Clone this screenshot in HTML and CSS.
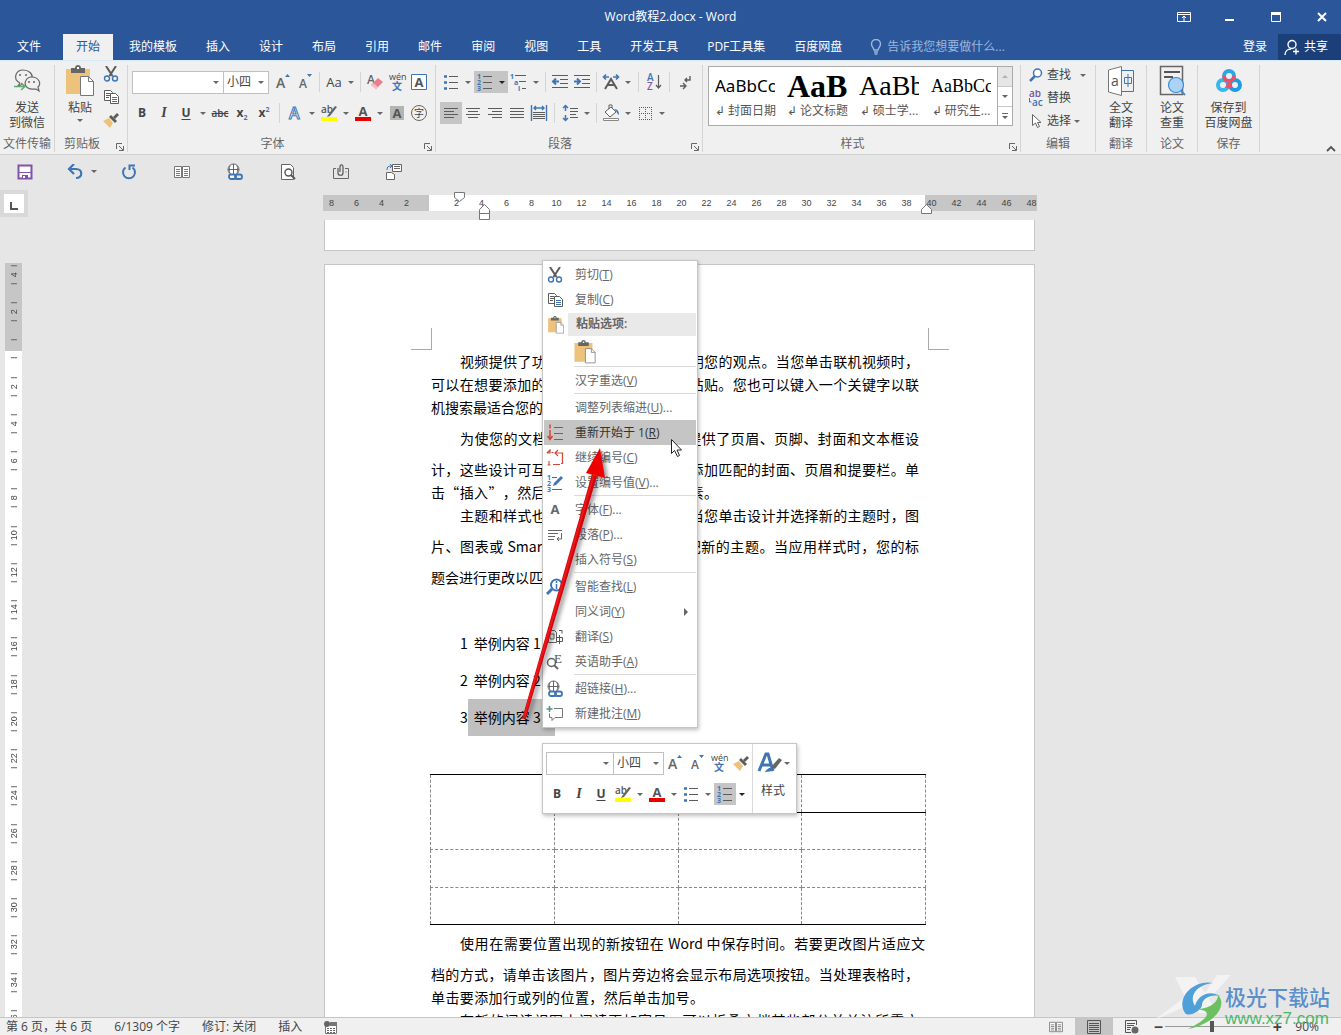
FILE: index.html
```html
<!DOCTYPE html>
<html lang="zh-CN">
<head>
<meta charset="utf-8">
<meta name="viewport" content="width=device-width, initial-scale=1">
<title>Word教程2.docx - Word</title>
<link rel="stylesheet" href="styles.css">
</head>
<body>
<svg class="defs" aria-hidden="true">
  <symbol id="scissors" viewBox="0 0 16 16"><path d="M3 0l6.500 10M13 0L6.500 10" fill="none" stroke="#5c5c5c" stroke-width="2"/><circle cx="4" cy="12.500" r="2.500" fill="none" stroke="#3f74b5" stroke-width="1.400"/><circle cx="12" cy="12.500" r="2.500" fill="none" stroke="#3f74b5" stroke-width="1.400"/></symbol>
  <symbol id="copy" viewBox="0 0 16 16"><path d="M1.500 1.500h6l2 2v8h-8zM3 4.500h4M3 6.500h4M3 8.500h3" fill="#fff" stroke="#5c5c5c"/><path d="M7.500 4.500h5l3 3v7h-8z" fill="#fff" stroke="#5c5c5c"/><path d="M9 8.500h5M9 10.500h5M9 12.500h5" stroke="#3f74b5"/></symbol>
  <symbol id="clip" viewBox="0 0 28 32"><path d="M0 4h24v25H0z" fill="#edc37c"/><path d="M5 3h4c0-4 6-4 6 0h4v5H5z" fill="#666"/><path d="M11 2h2v2h-2z" fill="#fff"/><path d="M14.500 11.500h8l5 5v14h-13z" fill="#fff" stroke="#777"/><path d="M22.500 11.500v5h5" fill="none" stroke="#777"/></symbol>
  <symbol id="brush" viewBox="0 0 16 16"><path d="M0 9l6-3 4 5-3 5z" fill="#edc37c"/><path d="M6 5l2-2 6 6-2 2z" fill="#5c5c5c"/><path d="M10 5l4-4 2 2-4 4z" fill="#5c5c5c"/></symbol>
  <symbol id="grow" viewBox="0 0 20 20"><text x="3" y="16" class="t14">A</text><path d="M12 5l2.500-3L17 5z" fill="#3f74b5"/></symbol>
  <symbol id="shrink" viewBox="0 0 20 20"><text x="4" y="16" class="t12">A</text><path d="M12 2l2.500 3L17 2z" fill="#3f74b5"/></symbol>
  <symbol id="eraser" viewBox="0 0 20 20"><text x="2" y="12" class="t12">A</text><path d="M6 13l7-7 5 4-7 7z" fill="#ec7f8f"/><path d="M6 13l2-2 5 4-2 2z" fill="#f6bcc5"/></symbol>
  <symbol id="wen" viewBox="0 0 20 20"><text x="2" y="8" class="t9">wén</text><text x="5" y="18" class="cj">文</text></symbol>
  <symbol id="boxa" viewBox="0 0 20 20"><path d="M2.500 2.500h15v15h-15z" fill="#fff" stroke="#3f74b5"/><text x="5.500" y="15" class="t14b">A</text></symbol>
  <symbol id="outa" viewBox="0 0 20 20"><text x="4" y="16" class="outl">A</text></symbol>
  <symbol id="hl" viewBox="0 0 20 20"><text x="2" y="10" class="t10b">ab</text><path d="M9 12l7-9 2 1-7 9-3 1z" fill="#666"/><path d="M2 14h16v4H2z" fill="#ff0"/></symbol>
  <symbol id="reda" viewBox="0 0 20 20"><text x="5.500" y="13" class="t14b">A</text><path d="M2 14h16v4H2z" fill="#e80000"/></symbol>
  <symbol id="shadea" viewBox="0 0 20 20"><path d="M3 3h14v14H3z" fill="#b4b4b4"/><text x="5.500" y="15" class="t14b">A</text></symbol>
  <symbol id="circ" viewBox="0 0 20 20"><circle cx="10" cy="10" r="7.500" fill="none" stroke="#666"/><text x="5" y="14" class="cjg">字</text></symbol>
  <symbol id="bul" viewBox="0 0 20 20"><path d="M3 4.500h3M3 10.500h3M3 16.500h3" stroke="#3f74b5" stroke-width="2.500"/><path d="M8 4.500h9M8 10.500h9M8 16.500h9" stroke="#5c5c5c"/></symbol>
  <symbol id="num" viewBox="0 0 20 20"><text x="2" y="7" class="n">1</text><text x="2" y="13" class="n">2</text><text x="2" y="19" class="n">3</text><path d="M8 4.500h9M8 10.500h9M8 16.500h9" stroke="#5c5c5c"/></symbol>
  <symbol id="multi" viewBox="0 0 20 20"><text x="1" y="7" class="n">1</text><text x="5" y="13" class="n">a</text><text x="9" y="19" class="n">i</text><path d="M6 3.500h11M10 9.500h7M13 16.500h4" stroke="#5c5c5c"/></symbol>
  <symbol id="outd" viewBox="0 0 20 20"><path d="M2 3.500h16M10 7.500h8M10 11.500h8M2 15.500h16" stroke="#5c5c5c"/><path d="M9 9.500H3M6 6.500l-3 3 3 3" fill="none" stroke="#3f74b5" stroke-width="2"/></symbol>
  <symbol id="ind" viewBox="0 0 20 20"><path d="M2 3.500h16M10 7.500h8M10 11.500h8M2 15.500h16" stroke="#5c5c5c"/><path d="M2 9.500h6M5 6.500l3 3-3 3" fill="none" stroke="#3f74b5" stroke-width="2"/></symbol>
  <symbol id="scale" viewBox="0 0 20 20"><path d="M8 5H3M12 5h5M5 2.500L2.500 5 5 7.500M15 2.500L17.500 5 15 7.500" fill="none" stroke="#3f74b5" stroke-width="1.600"/><path d="M4 17l6-10 6 10M7 13h6" fill="none" stroke="#5c5c5c" stroke-width="2"/></symbol>
  <symbol id="az" viewBox="0 0 20 20"><text x="3" y="9" class="n10">A</text><text x="3" y="18" class="np">Z</text><path d="M14.500 3v13M12 13l2.500 3 2.500-3" fill="none" stroke="#5c5c5c" stroke-width="1.200"/></symbol>
  <symbol id="marks" viewBox="0 0 20 20"><path d="M15 4v4h-5M12 6l-2 2 2 2M5 14h5M8 11l3 3-3 3" fill="none" stroke="#5c5c5c" stroke-width="1.400"/></symbol>
  <symbol id="al" viewBox="0 0 20 20"><path d="M3 5.500h14M3 8.500h10M3 11.500h14M3 14.500h10" stroke="#5c5c5c"/></symbol>
  <symbol id="ac" viewBox="0 0 20 20"><path d="M3 5.500h14M5 8.500h10M3 11.500h14M5 14.500h10" stroke="#5c5c5c"/></symbol>
  <symbol id="ar" viewBox="0 0 20 20"><path d="M3 5.500h14M7 8.500h10M3 11.500h14M7 14.500h10" stroke="#5c5c5c"/></symbol>
  <symbol id="aj" viewBox="0 0 20 20"><path d="M3 5.500h14M3 8.500h14M3 11.500h14M3 14.500h14" stroke="#5c5c5c"/></symbol>
  <symbol id="ad" viewBox="0 0 20 20"><path d="M2.500 2v16M17.500 2v16M5 5h10M7 3L5 5l2 2M13 3l2 2-2 2" fill="none" stroke="#3f74b5" stroke-width="1.400"/><path d="M4 9.500h12M4 11.500h12M4 13.500h12M4 15.500h12" stroke="#5c5c5c"/></symbol>
  <symbol id="lh" viewBox="0 0 20 20"><path d="M5.500 3v5M5.500 12v5M3 5l2.500-2.500L8 5M3 15l2.500 2.500L8 15" fill="none" stroke="#3f74b5" stroke-width="1.500"/><path d="M10 5.500h8M10 8.500h8M10 11.500h6M10 14.500h8" stroke="#5c5c5c"/></symbol>
  <symbol id="fill" viewBox="0 0 20 20"><path d="M4 9l6-5 5 5-6 5zM8 6V2h3v3" fill="#fff" stroke="#5c5c5c"/><path d="M13 6c4 0 5 3 5 6-2-1-2-3-3-4z" fill="#3f74b5"/><path d="M2.500 15.500h15v2h-15z" fill="#fff" stroke="#888"/></symbol>
  <symbol id="bord" viewBox="0 0 20 20"><path d="M4.500 4v13M10.500 4v13M16.500 4v13M4 4.500h13M4 10.500h13M4 16.500h13" stroke="#5c5c5c" stroke-dasharray="1 1"/></symbol>
  <symbol id="wechat" viewBox="0 0 28 24"><path d="M7 14c-8-4-4-13 3-13 6 0 10 4 9 8M7 14l-2 3 5-2" fill="none" stroke="#666" stroke-width="1.200"/><path d="M25 18c4-4 0-10-6-10-7 0-9 8-4 11 3 2 6 1 8 1l3 2z" fill="#f0f0f0" stroke="#666" stroke-width="1.200"/><path d="M7 5v2M13 5v2M16 12v2M21 12v2" stroke="#666" stroke-width="1.500"/><path d="M1 17.500h10M8 14l4 3.500L8 21" fill="none" stroke="#5cab6b" stroke-width="1.500"/></symbol>
  <symbol id="glass" viewBox="0 0 16 16"><circle cx="9.500" cy="6" r="4" fill="#fff" stroke="#3f74b5" stroke-width="1.500"/><path d="M7 9l-5 5" stroke="#3f74b5" stroke-width="2.500"/></symbol>
  <symbol id="repl" viewBox="0 0 16 16"><text x="1" y="7" class="np9">ab</text><text x="4" y="16" class="n9">ac</text><path d="M1.500 8v4h2" fill="none" stroke="#3f74b5"/></symbol>
  <symbol id="ptr" viewBox="0 0 16 16"><path d="M4.500 1.500v11l3-2.500 2 4.500 2-1-2-4h3.500z" fill="#fff" stroke="#666"/></symbol>
  <symbol id="trans" viewBox="0 0 28 32"><path d="M1.500 5L14.500 1.500v29L1.500 27z" fill="#fff" stroke="#777"/><path d="M14.500 5.500h12v21h-12" fill="none" stroke="#3f74b5"/><text x="4" y="21" class="t14l">a</text><path d="M17.500 12.500h7v6h-7zM21 9v13" fill="none" stroke="#3f74b5"/></symbol>
  <symbol id="check" viewBox="0 0 28 32"><path d="M2.500 1.500h22v28h-22z" fill="none" stroke="#666" stroke-width="1.500"/><path d="M6 7h16M6 12h9" stroke="#555" stroke-width="2"/><circle cx="18" cy="20" r="7.500" fill="#a9d4f7" stroke="#3f8bd0" stroke-width="1.200"/><path d="M23 26l4 4" stroke="#3f8bd0" stroke-width="2"/></symbol>
  <symbol id="pan" viewBox="0 0 28 28"><circle cx="8" cy="18" r="5" fill="none" stroke="#35b8ef" stroke-width="4"/><circle cx="20" cy="18" r="5" fill="none" stroke="#209be5" stroke-width="4"/><circle cx="14" cy="9" r="5" fill="none" stroke="#2da6e8" stroke-width="4"/><path d="M9 9a5 5 0 0 0 10 0M14 14c0 3-1 5-2 7M14 14c0 3 1 5 2 7" fill="none" stroke="#ef5063" stroke-width="3.500"/></symbol>
  <symbol id="save" viewBox="0 0 16 16"><path d="M1.500 1.500h13v13h-13z" fill="#fff" stroke="#8152a8" stroke-width="2"/><path d="M2 8h12v1H2zM5 11h6v4H5z" fill="#8152a8"/><path d="M6 12h2v2H6z" fill="#fff"/></symbol>
  <symbol id="undo" viewBox="0 0 18 16"><path d="M3 5h7c7 0 7 9 0 9M8 0L3 5l5 5" fill="none" stroke="#3f74b5" stroke-width="2.200"/></symbol>
  <symbol id="redo" viewBox="0 0 16 16"><path d="M4.500 3.500a6 6 0 1 0 7 0M8.500 6V1.500H14" fill="none" stroke="#3f74b5" stroke-width="2"/></symbol>
  <symbol id="read" viewBox="0 0 18 14"><path d="M1.500 1.500h7v11h-7zM9.500 1.500h7v11h-7z" fill="#fff" stroke="#777"/><path d="M3 4.500h4M3 6.500h4M3 8.500h4M3 10.500h4M11 4.500h4M11 6.500h4M11 8.500h4M11 10.500h4" stroke="#777"/></symbol>
  <symbol id="link" viewBox="0 0 18 18"><circle cx="7.500" cy="6.500" r="5.500" fill="#fff" stroke="#666"/><path d="M2 6.500h11M7.500 1v11M4 2.500c-1 3-1 5 0 8M11 2.500c1 3 1 5 0 8" fill="none" stroke="#666"/><rect x="3" y="11.500" width="7" height="4.500" rx="2" fill="#fff" stroke="#3f74b5" stroke-width="1.800"/><rect x="9" y="11.500" width="7" height="4.500" rx="2" fill="none" stroke="#3f74b5" stroke-width="1.800"/></symbol>
  <symbol id="prev" viewBox="0 0 16 18"><path d="M1.500 1.500h9l3 3v12h-12z" fill="#fff" stroke="#666"/><circle cx="8.500" cy="9.500" r="3.500" fill="#fff" stroke="#555" stroke-width="1.400"/><path d="M11 12l4 4" stroke="#555" stroke-width="2"/></symbol>
  <symbol id="mail" viewBox="0 0 18 16"><path d="M4 4.500H1.500v10h15v-10H13" fill="none" stroke="#666"/><path d="M6 4v5c0 3 5 3 5 0V3c0-3-3-3-3 0v5" fill="none" stroke="#555" stroke-width="1.200"/><path d="M14 7.500v1" stroke="#666"/></symbol>
  <symbol id="track" viewBox="0 0 18 18"><path d="M7.500 1.500h9v7h-9zM9 3.500h6M9 5.500h6" fill="#fff" stroke="#666"/><path d="M1.500 9.500h5l3 2v5h-8z" fill="#fff" stroke="#666"/><path d="M2 7c0-3 1-4 4-4M5 1l2 2-2 2" fill="none" stroke="#3f74b5"/></symbol>
  <symbol id="launch" viewBox="0 0 9 9"><path d="M1.500 7V1.500H7M4 4l4 4M8.500 4v4.500H4" fill="none" stroke="#666"/></symbol>
  <symbol id="restart" viewBox="0 0 18 18"><path d="M8 3.500h9M8 9.500h9M8 15.500h9" stroke="#666"/><path d="M4 6v9M1.500 12L4 15.500 6.500 12M4 .5v4" fill="none" stroke="#cf4a36" stroke-width="1.500"/></symbol>
  <symbol id="cont" viewBox="0 0 18 18"><path d="M9 4h7.500v10.500H15M12 1L9 4l3 3M5.500 3.500h2M1 4h3V1L1 4M3 12v4M1.500 16h3M7 15.500h7" fill="none" stroke="#cf4a36" stroke-width="1.200"/></symbol>
  <symbol id="setn" viewBox="0 0 18 18"><text x="1" y="6" class="n">1</text><text x="1" y="12" class="n">2</text><text x="1" y="18" class="n">3</text><path d="M6 3.500h5M6 15.500h10" stroke="#666"/><path d="M7 12l1-3 7-7 2 2-7 7z" fill="#3f74b5"/></symbol>
  <symbol id="para" viewBox="0 0 18 18"><path d="M2 4.500h14M2 7.500h10M2 10.500h7M2 13.500h6M15.500 7v6H11M13 11l-2 2 2 2" fill="none" stroke="#666"/></symbol>
  <symbol id="smart" viewBox="0 0 18 18"><circle cx="10.500" cy="7" r="5.500" fill="#fff" stroke="#3f74b5" stroke-width="2"/><path d="M6 11l-5 5" stroke="#3f74b5" stroke-width="3"/><path d="M10.500 3v2M10.500 6v5" stroke="#3f74b5" stroke-width="1.500"/></symbol>
  <symbol id="tr" viewBox="0 0 18 18"><path d="M2.500 2.500h6l2 2v10h-8zM4 6h4v5H4z" fill="#fff" stroke="#666"/><path d="M10.500 9.500h6v4h-6zM13.500 7v9M13 2.500h3v3" fill="#fff" stroke="#555"/></symbol>
  <symbol id="eng" viewBox="0 0 18 18"><circle cx="5.500" cy="9.500" r="4" fill="#fff" stroke="#666" stroke-width="1.500"/><path d="M8 12l4 4" stroke="#666" stroke-width="2"/><text x="8" y="10" class="se">E</text></symbol>
  <symbol id="cmt" viewBox="0 0 18 18"><path d="M8 3.500h8.500v9H9l-3 3v-3H3.500v-4" fill="none" stroke="#777"/><path d="M3.500 1v6M.5 4h6" stroke="#4e9a78" stroke-width="1.500"/></symbol>
  <symbol id="stylea" viewBox="0 0 28 24"><path d="M3 20L10 3h2l5 17M6 14h9" fill="none" stroke="#3f74b5" stroke-width="3"/><path d="M15 16l8-9 3 2-7 9z" fill="#666"/><path d="M8 21c2 0 4-5 7-4s3 4-7 4z" fill="#3f74b5"/></symbol>
  <symbol id="lines" viewBox="0 0 16 14"><path d="M1.500.5h13v13h-13zM3 3.500h10M3 5.500h10M3 7.500h10M3 9.500h10M3 11.500h10" fill="none" stroke="#555"/></symbol>
  <symbol id="web" viewBox="0 0 16 14"><path d="M12.500 5V.5h-11v12H7M3 3.500h8M3 5.500h7M3 7.500h4M3 9.500h3" fill="none" stroke="#555"/><circle cx="11" cy="10" r="3.500" fill="#666"/></symbol>
  <symbol id="macro" viewBox="0 0 14 14"><path d="M1.500 4.500h11v9h-11z" fill="#fff" stroke="#777"/><path d="M3 8.500h2M6 8.500h2M9 8.500h2M3 10.500h2M6 10.500h2M9 10.500h2M3 12.500h2M6 12.500h2M9 12.500h2" stroke="#666"/><path d="M6 2h7v4H6z" fill="#777"/><circle cx="3" cy="4" r="3" fill="#666"/></symbol>
  <symbol id="bulb" viewBox="0 0 12 16"><path d="M4 11c0-2-2.500-3-2.500-6a4.500 4.500 0 0 1 9 0c0 3-2.500 4-2.500 6zM4 13h4M4.500 15h3" fill="none" stroke="#9db6dc" stroke-width="1.400"/></symbol>
</svg>

<div class="app">
  <header class="top">
    <div class="titlebar">
      <h1>Word教程2.docx - Word</h1>
      <div class="winbtns">
        <button aria-label="功能区显示选项"><svg width="14" height="12"><path d="M.5 1.500h13v9H.5zM.5 3.500h13M7 10V5M5 7l2-2 2 2" fill="none" stroke="#fff"/></svg></button>
        <button aria-label="最小化"><svg width="14" height="12"><path d="M2 8h9v2H2z" fill="#fff"/></svg></button>
        <button aria-label="最大化"><svg width="14" height="12"><path d="M2.500 1.500h9v9h-9z" fill="none" stroke="#fff"/><path d="M2 1h10v3H2z" fill="#fff"/></svg></button>
        <button aria-label="关闭"><svg width="14" height="12"><path d="M3 2l8 8M11 2l-8 8" stroke="#fff" stroke-width="2"/></svg></button>
      </div>
    </div>
    <nav class="tabs">
      <button class="file">文件</button><button class="on">开始</button><button>我的模板</button><button>插入</button><button>设计</button><button>布局</button><button>引用</button><button>邮件</button><button>审阅</button><button>视图</button><button>工具</button><button>开发工具</button><button>PDF工具集</button><button>百度网盘</button>
      <button class="tell"><svg width="12" height="16"><use href="#bulb"/></svg>告诉我您想要做什么...</button>
      <button class="login">登录</button>
      <button class="share"><svg width="16" height="16"><circle cx="8" cy="5.500" r="4" fill="none" stroke="#fff" stroke-width="1.400"/><path d="M1 16c0-4 3-6 6-6M9 12.500h6M12 9.500v6" fill="none" stroke="#fff" stroke-width="1.400"/></svg>共享</button>
    </nav>
  </header>

  <section class="ribbon" aria-label="功能区">
    <div class="group g-send">
      <button class="big"><svg width="28" height="32"><use href="#wechat"/></svg><span>发送<br>到微信</span></button>
      <div class="glabel">文件传输</div>
    </div>
    <div class="group g-clip">
      <div class="cliprow">
        <button class="big"><svg width="28" height="32"><use href="#clip"/></svg><span>粘贴</span><i class="caret"></i></button>
        <div class="stack">
          <button aria-label="剪切"><svg width="16" height="16"><use href="#scissors"/></svg></button>
          <button aria-label="复制"><svg width="16" height="16"><use href="#copy"/></svg></button>
          <button aria-label="格式刷"><svg width="16" height="16"><use href="#brush"/></svg></button>
        </div>
      </div>
      <div class="glabel">剪贴板<svg class="launch" width="9" height="9"><use href="#launch"/></svg></div>
    </div>
    <div class="group g-font">
      <div class="rows">
        <div class="row">
          <button class="combo fontname" aria-label="字体"><span></span><i class="caret"></i></button><button class="combo fontsize" aria-label="字号"><span>小四</span><i class="caret"></i></button>
          <button class="ib first" aria-label="增大字号"><svg><use href="#grow"/></svg></button>
          <button class="ib" aria-label="减小字号"><svg><use href="#shrink"/></svg></button>
          <i class="sep"></i>
          <button class="ib aa">Aa</button><button class="dd" aria-label="更多"></button>
          <i class="sep"></i>
          <button class="ib" aria-label="清除格式"><svg><use href="#eraser"/></svg></button>
          <button class="ib" aria-label="拼音指南"><svg><use href="#wen"/></svg></button>
          <button class="ib" aria-label="字符边框"><svg><use href="#boxa"/></svg></button>
        </div>
        <div class="row">
          <button class="ib"><b>B</b></button>
          <button class="ib"><i class="it">I</i></button>
          <button class="ib"><b class="un">U</b></button><button class="dd" aria-label="更多"></button>
          <button class="ib"><s>abc</s></button>
          <button class="ib"><b>x<sub>2</sub></b></button>
          <button class="ib"><b>x<sup>2</sup></b></button>
          <i class="sep wide"></i>
          <button class="ib" aria-label="文本效果"><svg><use href="#outa"/></svg></button><button class="dd" aria-label="更多"></button>
          <button class="ib" aria-label="突出显示"><svg><use href="#hl"/></svg></button><button class="dd" aria-label="更多"></button>
          <button class="ib" aria-label="字体颜色"><svg><use href="#reda"/></svg></button><button class="dd" aria-label="更多"></button>
          <button class="ib" aria-label="字符底纹"><svg><use href="#shadea"/></svg></button>
          <button class="ib" aria-label="带圈字符"><svg><use href="#circ"/></svg></button>
        </div>
      </div>
      <div class="glabel">字体<svg class="launch" width="9" height="9"><use href="#launch"/></svg></div>
    </div>
    <div class="group g-para">
      <div class="rows">
        <div class="row">
          <button class="ib" aria-label="项目符号"><svg><use href="#bul"/></svg></button><button class="dd" aria-label="更多"></button>
          <button class="ib on" aria-label="编号"><svg><use href="#num"/></svg></button><button class="dd on" aria-label="更多"></button>
          <button class="ib" aria-label="多级列表"><svg><use href="#multi"/></svg></button><button class="dd" aria-label="更多"></button>
          <i class="sep"></i>
          <button class="ib" aria-label="减少缩进"><svg><use href="#outd"/></svg></button>
          <button class="ib" aria-label="增加缩进"><svg><use href="#ind"/></svg></button>
          <i class="sep"></i>
          <button class="ib" aria-label="中文版式"><svg><use href="#scale"/></svg></button><button class="dd" aria-label="更多"></button>
          <i class="sep wide"></i>
          <button class="ib" aria-label="排序"><svg><use href="#az"/></svg></button>
          <i class="sep wide"></i>
          <button class="ib" aria-label="显示编辑标记"><svg><use href="#marks"/></svg></button>
        </div>
        <div class="row">
          <button class="ib on" aria-label="左对齐"><svg><use href="#al"/></svg></button>
          <button class="ib" aria-label="居中"><svg><use href="#ac"/></svg></button>
          <button class="ib" aria-label="右对齐"><svg><use href="#ar"/></svg></button>
          <button class="ib" aria-label="两端对齐"><svg><use href="#aj"/></svg></button>
          <button class="ib" aria-label="分散对齐"><svg><use href="#ad"/></svg></button>
          <i class="sep wide"></i>
          <button class="ib" aria-label="行距"><svg><use href="#lh"/></svg></button><button class="dd" aria-label="更多"></button>
          <i class="sep"></i>
          <button class="ib" aria-label="底纹"><svg><use href="#fill"/></svg></button><button class="dd" aria-label="更多"></button>
          <button class="ib" aria-label="边框"><svg><use href="#bord"/></svg></button><button class="dd" aria-label="更多"></button>
        </div>
      </div>
      <div class="glabel">段落<svg class="launch" width="9" height="9"><use href="#launch"/></svg></div>
    </div>
    <div class="group g-style">
      <div class="gallery">
        <button class="st"><span class="pv p1">AaBbCc</span><span>↲ 封面日期</span></button>
        <button class="st"><span class="pv p2">AaB</span><span>↲ 论文标题</span></button>
        <button class="st"><span class="pv p3">AaBb</span><span>↲ 硕士学...</span></button>
        <button class="st"><span class="pv p4">AaBbCc</span><span>↲ 研究生...</span></button>
        <div class="gscroll"><button class="off" aria-label="上一行"><i class="caret up"></i></button><button aria-label="下一行"><i class="caret"></i></button><button class="more" aria-label="其他"><i class="caret"></i></button></div>
      </div>
      <div class="glabel">样式<svg class="launch" width="9" height="9"><use href="#launch"/></svg></div>
    </div>
    <div class="group g-edit">
      <div class="edits">
        <button><svg width="16" height="16"><use href="#glass"/></svg><span>查找</span><i class="caret far"></i></button>
        <button><svg width="16" height="16"><use href="#repl"/></svg><span>替换</span></button>
        <button><svg width="16" height="16"><use href="#ptr"/></svg><span>选择</span><i class="caret"></i></button>
      </div>
      <div class="glabel">编辑</div>
    </div>
    <div class="group g-sm"><button class="big"><svg width="28" height="32"><use href="#trans"/></svg><span>全文<br>翻译</span></button><div class="glabel">翻译</div></div>
    <div class="group g-sm"><button class="big"><svg width="28" height="32"><use href="#check"/></svg><span>论文<br>查重</span></button><div class="glabel">论文</div></div>
    <div class="group g-pan"><button class="big"><svg width="28" height="32"><use href="#pan"/></svg><span>保存到<br>百度网盘</span></button><div class="glabel">保存</div></div>
    <button class="collapse" aria-label="折叠功能区"><svg width="10" height="7"><path d="M1 6l4-4 4 4" fill="none" stroke="#555" stroke-width="1.800"/></svg></button>
  </section>

  <div class="qat">
    <button aria-label="保存"><svg width="16" height="16"><use href="#save"/></svg></button>
    <button class="undo" aria-label="撤消"><svg width="18" height="16"><use href="#undo"/></svg><i class="caret"></i></button>
    <button aria-label="重复"><svg width="16" height="16"><use href="#redo"/></svg></button>
    <button aria-label="阅读视图"><svg width="18" height="14"><use href="#read"/></svg></button>
    <button aria-label="超链接"><svg width="18" height="18"><use href="#link"/></svg></button>
    <button aria-label="打印预览"><svg width="16" height="18"><use href="#prev"/></svg></button>
    <button aria-label="电子邮件"><svg width="18" height="16"><use href="#mail"/></svg></button>
    <button aria-label="修订"><svg width="18" height="18"><use href="#track"/></svg></button>
  </div>

  <main class="work">
    <aside class="side">
      <button class="tabsel" aria-label="制表符"><svg width="14" height="19"><path d="M4 8v7h7" fill="none" stroke="#555" stroke-width="2"/></svg></button>
      <div class="vclip"><ol class="vruler"><li>4</li><li>2</li><li></li><li>2</li><li>4</li><li>6</li><li>8</li><li>10</li><li>12</li><li>14</li><li>16</li><li>18</li><li>20</li><li>22</li><li>24</li><li>26</li><li>28</li><li>30</li><li>32</li><li>34</li><li>36</li></ol></div>
    </aside>
    <div class="canvas">
      <div class="hruler">
        <span>8</span><span>6</span><span>4</span><span>2</span><span></span><span>2</span><span>4</span><span>6</span><span>8</span><span>10</span><span>12</span><span>14</span><span>16</span><span>18</span><span>20</span><span>22</span><span>24</span><span>26</span><span>28</span><span>30</span><span>32</span><span>34</span><span>36</span><span>38</span><span>40</span><span>42</span><span>44</span><span>46</span><span>48</span>
        <svg class="mk first" width="12" height="11"><path d="M.5.500h10v5l-5 4-5-4z" fill="#fff" stroke="#777"/></svg>
        <svg class="mk hang" width="12" height="16"><path d="M.5 15.500v-10l5-5 5 5v10zM.5 9.500h10" fill="#fff" stroke="#777"/></svg>
        <svg class="mk right" width="12" height="11"><path d="M.5 9.500v-4l5-5 5 5v4z" fill="#fff" stroke="#777"/></svg>
      </div>
      <div class="page prev"></div>
      <article class="page">
        <div class="corners"><i></i><i></i></div>
        <div class="text">
          <p><span class="ln in full">视频提供了功能强大的方法帮助您证明您的观点。当您单击联机视频时，</span><span class="ln full">可以在想要添加的视频的嵌入代码中进行粘贴。您也可以键入一个关键字以联</span><span class="ln">机搜索最适合您的文档的视频。</span></p>
          <p><span class="ln in full loose">为使您的文档具有专业外观，Word 提供了页眉、页脚、封面和文本框设</span><span class="ln full loose">计，这些设计可互为补充。例如，您可以添加匹配的封面、页眉和提要栏。单</span><span class="ln full c20">击“插入”，然后从不同库中选择所需元素。</span></p>
          <p><span class="ln in full">主题和样式也有助于文档保持协调。当您单击设计并选择新的主题时，图</span><span class="ln full loose">片、图表或 SmartArt 图形将会更改以匹配新的主题。当应用样式时，您的标</span><span class="ln loose">题会进行更改以匹配新的主题。</span></p>
          <ul class="list">
            <li><span>1</span><span>举例内容 1</span></li>
            <li><span>2</span><span>举例内容 2</span></li>
            <li><span>3</span><span class="sel">举例内容 3</span></li>
          </ul>
          <table class="grid">
            <tr><td rowspan="2"></td><td class="u"></td><td class="u"></td><td class="u"></td></tr>
            <tr><td></td><td></td><td></td></tr>
            <tr><td></td><td></td><td></td><td></td></tr>
            <tr><td></td><td></td><td></td><td></td></tr>
          </table>
          <p><span class="ln in full max">使用在需要位置出现的新按钮在 Word 中保存时间。若要更改图片适应文</span><span class="ln full loose">档的方式，请单击该图片，图片旁边将会显示布局选项按钮。当处理表格时，</span><span class="ln full c19">单击要添加行或列的位置，然后单击加号。</span></p>
          <p><span class="ln in full">在新的阅读视图中阅读更加容易。可以折叠文档某些部分并关注所需文</span></p>
        </div>

        <div class="menu" role="menu">
          <button role="menuitem"><svg width="16" height="16"><use href="#scissors"/></svg><span>剪切(<u>T</u>)</span></button>
          <button role="menuitem"><svg width="16" height="16"><use href="#copy"/></svg><span>复制(<u>C</u>)</span></button>
          <div class="mhead"><svg width="16" height="18"><use href="#clip"/></svg><b>粘贴选项:</b></div>
          <button class="mpaste" role="menuitem" aria-label="保留源格式"><svg width="21" height="24"><use href="#clip"/></svg></button>
          <hr>
          <button role="menuitem"><svg width="18" height="18"></svg><span>汉字重选(<u>V</u>)</span></button>
          <hr>
          <button role="menuitem"><svg width="18" height="18"></svg><span>调整列表缩进(<u>U</u>)...</span></button>
          <button class="hot" role="menuitem"><svg width="18" height="18"><use href="#restart"/></svg><span>重新开始于 1(<u>R</u>)</span></button>
          <button role="menuitem"><svg width="18" height="18"><use href="#cont"/></svg><span>继续编号(<u>C</u>)</span></button>
          <button role="menuitem"><svg width="18" height="18"><use href="#setn"/></svg><span>设置编号值(<u>V</u>)...</span></button>
          <hr>
          <button role="menuitem"><b class="mi">A</b><span>字体(<u>F</u>)...</span></button>
          <button role="menuitem"><svg width="18" height="18"><use href="#para"/></svg><span>段落(<u>P</u>)...</span></button>
          <button role="menuitem"><svg width="18" height="18"></svg><span>插入符号(<u>S</u>)</span></button>
          <hr>
          <button role="menuitem"><svg width="18" height="18"><use href="#smart"/></svg><span>智能查找(<u>L</u>)</span></button>
          <button role="menuitem"><svg width="18" height="18"></svg><span>同义词(<u>Y</u>)</span><i class="sub"></i></button>
          <button role="menuitem"><svg width="18" height="18"><use href="#tr"/></svg><span>翻译(<u>S</u>)</span></button>
          <button role="menuitem"><svg width="18" height="18"><use href="#eng"/></svg><span>英语助手(<u>A</u>)</span></button>
          <hr>
          <button role="menuitem"><svg width="18" height="18"><use href="#link"/></svg><span>超链接(<u>H</u>)...</span></button>
          <button role="menuitem"><svg width="18" height="18"><use href="#cmt"/></svg><span>新建批注(<u>M</u>)</span></button>
        </div>

        <div class="mini" role="toolbar">
          <div class="mrows">
            <div class="row">
              <button class="combo mname" aria-label="字体"><span></span><i class="caret"></i></button><button class="combo msize" aria-label="字号"><span>小四</span><i class="caret"></i></button>
              <button class="ib" aria-label="增大字号"><svg><use href="#grow"/></svg></button>
              <button class="ib" aria-label="减小字号"><svg><use href="#shrink"/></svg></button>
              <button class="ib" aria-label="拼音指南"><svg><use href="#wen"/></svg></button>
              <button class="ib" aria-label="格式刷"><svg class="s16"><use href="#brush"/></svg></button>
            </div>
            <div class="row">
              <button class="ib"><b>B</b></button>
              <button class="ib"><i class="it">I</i></button>
              <button class="ib"><b class="un">U</b></button>
              <button class="ib" aria-label="突出显示"><svg><use href="#hl"/></svg></button><button class="dd" aria-label="更多"></button>
              <button class="ib" aria-label="字体颜色"><svg><use href="#reda"/></svg></button><button class="dd" aria-label="更多"></button>
              <button class="ib" aria-label="项目符号"><svg><use href="#bul"/></svg></button><button class="dd" aria-label="更多"></button>
              <button class="ib on" aria-label="编号"><svg><use href="#num"/></svg></button><button class="dd dark" aria-label="更多"></button>
            </div>
          </div>
          <button class="mstyle"><span><svg width="28" height="24"><use href="#stylea"/></svg><i class="caret"></i></span><span>样式</span></button>
        </div>

        <svg class="arrow" width="110" height="290" aria-hidden="true"><g class="shadow"><path d="M9 273L79 28l5 2L13 272z" fill="#d8000c"/><path d="M87 2L73 27l19 5z" fill="#e00"/><path d="M10 271L80 28h2L12 272z" fill="#e81818"/></g></svg>
        <svg class="cursor" width="14" height="21" aria-hidden="true"><path d="M1.500 1.500v14l3-3 3 6 2-1-2.500-5.500h4.500z" fill="#fff" stroke="#222"/></svg>
      </article>
    </div>
  </main>

  <footer class="status">
    <span>第 6 页，共 6 页</span><span>6/1309 个字</span><span>修订: 关闭</span><span>插入</span><svg width="14" height="14"><use href="#macro"/></svg>
    <div class="views">
      <button aria-label="阅读视图"><svg width="16" height="12"><use href="#read"/></svg></button>
      <button class="on" aria-label="页面视图"><svg width="16" height="14"><use href="#lines"/></svg></button>
      <button aria-label="Web 版式视图"><svg width="16" height="14"><use href="#web"/></svg></button>
      <button class="zm" aria-label="缩小">−</button>
      <input type="range" min="10" max="190" value="90" aria-label="显示比例">
      <button class="zm" aria-label="放大">+</button>
      <span class="pct">90%</span>
    </div>
  </footer>

  <div class="mark" aria-hidden="true">
    <svg width="90" height="60"><path d="M24 2h20l10 16L66 0h14L58 24l8 14H48l-6-10L2 46l32-24z" fill="#fff" opacity=".5"/><path d="M34 38C24 22 44 4 62 8 44 10 38 22 44 31c2-9 13-17 25-10-10-2-18 3-18 9 0 5-13 13-17 8z" fill="#4f9fd8"/><path d="M47 34c13-1 20-7 20-14 9 9 0 28-30 34 14-7 23-14 17-18z" fill="#6cc062"/></svg>
    <div><strong>极光下载站</strong><em>www.xz7.com</em></div>
  </div>
</div>
</body>
</html>
```
FILE: styles.css
```css
* { box-sizing: border-box; }
body {
  margin: 0;
  font: 12px/16px "Open Sans", "Noto Sans CJK SC", sans-serif;
  color: #444;
  background: #e6e6e6;
}
button {
  font: inherit;
  color: inherit;
  background: none;
  border: 0;
  padding: 0;
  margin: 0;
}
svg { display: block; flex: none; }
.defs { display: none; }
.app { position: relative; display: flex; flex-direction: column; height: 100vh; overflow: hidden; }

/* text inside icons */
.t14 { font-size: 14px; font-weight: 600; fill: #666; }
.t14l { font-size: 14px; fill: #555; }
.t14b { font-size: 13px; font-weight: 700; fill: #555; }
.t12 { font-size: 12px; font-weight: 600; fill: #666; }
.t10b { font-size: 10px; font-weight: 600; fill: #555; }
.t9 { font-size: 9px; fill: #444; }
.n { font-size: 7px; font-weight: 700; fill: #3f74b5; }
.n9 { font-size: 10px; font-weight: 600; fill: #3f74b5; }
.n10 { font-size: 10px; font-weight: 600; fill: #3f74b5; }
.np { font-size: 10px; font-weight: 600; fill: #9254a3; }
.np9 { font-size: 10px; font-weight: 600; fill: #77559a; }
.cj { font-size: 10px; font-weight: 700; fill: #3f74b5; }
.cjg { font-size: 10px; fill: #444; }
.outl { font-size: 16px; font-weight: 600; fill: #fff; stroke: #3f74b5; }
.se { font-size: 13px; font-family: "Liberation Serif", serif; fill: #555; }

/* title bar and tabs */
.top { background: #2b579a; color: #fff; }
.titlebar { display: grid; grid-template-columns: 1fr auto 1fr; height: 34px; align-items: center; }
.titlebar h1 { grid-column: 2; margin: 0; font-size: 12px; font-weight: 400; }
.winbtns { display: flex; justify-content: flex-end; }
.winbtns button { width: 46px; height: 34px; display: grid; place-items: center; }
.winbtns button:last-child { margin-right: -4px; }
.tabs { display: flex; height: 26px; gap: 3px; align-items: stretch; white-space: nowrap; }
.tabs button { padding: 0 13px; height: 26px; line-height: 22px; }
.tabs .file { margin: 0 6px 0 4px; }
.tabs .on { background: #f0f0f0; color: #2b579a; }
.tabs .tell { display: flex; align-items: center; gap: 5px; color: #9db6dc; padding: 0 12px; }
.tabs .login { margin-left: auto; padding: 0 8px; }
.tabs .share { display: flex; align-items: center; gap: 4px; padding: 0 13px 0 6px; background: #1b4079; }

/* ribbon */
.ribbon { display: flex; height: 95px; padding-top: 4px; background: #f0f0f0; border-top: 1px solid #d6ebf8; border-bottom: 1px solid #d0d0d0; }
.group { display: flex; flex-direction: column; justify-content: space-between; flex: none; position: relative; height: 87px; border-right: 1px solid #d4d4d4; white-space: nowrap; }
.glabel { text-align: center; color: #666; height: 17px; line-height: 17px; }
.launch { position: absolute; right: 3px; bottom: 1px; }
.g-send { width: 55px; }
.g-clip { width: 73px; }
.g-clip .glabel { padding-right: 18px; }
.g-font { width: 308px; }
.g-font .glabel { padding-right: 18px; }
.g-para { width: 267px; }
.g-para .glabel { padding-right: 18px; }
.g-style { width: 318px; }
.g-style .glabel { padding-right: 18px; }
.g-edit { width: 75px; }
.g-sm { width: 51px; }
.g-pan { width: 62px; }
.big { display: flex; flex-direction: column; align-items: center; line-height: 15px; height: 68px; }
.big span { padding-top: 3px; }
.caret { display: block; flex: none; width: 0; border: 3px solid transparent; border-top-color: #666; border-bottom-width: 0; }
.caret.up { transform: rotate(180deg); opacity: 0.4; }
.big .caret { margin-top: 4px; }
.cliprow { display: flex; padding-left: 11px; gap: 9px; }
.stack { display: flex; flex-direction: column; gap: 7px; padding-top: 1px; }
.rows { display: flex; flex-direction: column; gap: 9px; padding: 6px 0 0 3px; }
.row { display: flex; align-items: center; height: 22px; }
.ib { width: 22px; height: 22px; flex: none; display: grid; place-items: center; }
.ib svg { width: 20px; height: 20px; }
.ib .s16 { width: 16px; height: 16px; }
.ib.first { margin-left: 3px; }
.aa { font-size: 13px; }
.it { font: italic 700 14px/16px "Liberation Serif", serif; }
.un { text-decoration: underline; text-underline-offset: 2px; }
.ib s { font-size: 10px; font-weight: 600; }
.ib sub, .ib sup { font-size: 7px; line-height: 0; color: #3f74b5; }
.dd { width: 12px; height: 22px; flex: none; display: grid; place-items: center; }
.dd::after { content: ""; border: 3px solid transparent; border-top-color: #666; border-bottom-width: 0; }
.on { background: #c5c5c5; }
.dd.on::after, .dd.dark::after { border-top-color: #222; }
.sep { width: 1px; height: 20px; margin: 0 3px; background: #d4d4d4; }
.sep.wide { margin: 0 4px; }
.combo { display: flex; align-items: center; justify-content: space-between; height: 23px; padding: 0 4px 0 3px; background: #fff; border: 1px solid #c0c0c0; }
.fontname { width: 92px; margin-left: 1px; }
.fontsize { width: 46px; margin-left: -1px; }
.g-para .rows { padding-left: 4px; }
.gallery { display: flex; height: 60px; margin: 1px 7px 0 5px; background: #fff; border: 1px solid #ababab; }
.st { flex: 1 1 0; min-width: 0; padding: 0 6px; display: flex; flex-direction: column; overflow: hidden; color: #555; }
.st .pv { width: 100%; height: 36px; line-height: 38px; overflow: hidden; text-align: left; color: #000; }
.p1 { font: 17px "Noto Sans", sans-serif; }
.p2 { font: 700 32px "Liberation Serif", serif; }
.p3 { font: 28px "Liberation Serif", serif; }
.p4 { font: 18px "Liberation Serif", serif; }
.gscroll { width: 15px; display: grid; grid-template-rows: repeat(3, 1fr); border-left: 1px solid #ababab; }
.gscroll button { display: grid; place-content: center; }
.gscroll button + button { border-top: 1px solid #c8c8c8; }
.gscroll .off { background: #e6e6e6; }
.gscroll .more::before { content: ""; width: 6px; height: 1px; margin-bottom: 2px; background: #666; }
.edits { display: flex; flex-direction: column; padding-left: 7px; }
.edits button { display: flex; align-items: center; gap: 3px; height: 23px; padding-bottom: 3px; }
.edits .far { margin-left: 6px; }
.collapse { margin: auto 5px 2px auto; }

/* quick access */
.qat { display: flex; flex: none; height: 35px; padding-bottom: 2px; }
.qat button { width: 53px; flex: none; display: flex; align-items: center; justify-content: center; }
.qat button:first-child { width: 49px; }
.qat .undo { justify-content: flex-start; padding-left: 17px; gap: 7px; }

/* workspace */
.work { display: grid; grid-template-columns: 28px 1fr; flex: 1; min-height: 0; padding-right: 10px; overflow: hidden; }
.side { display: flex; flex-direction: column; min-height: 0; }
.tabsel { width: 28px; height: 27px; display: grid; place-items: center; background: #fff; border: 4px solid #d9d9d9; margin-bottom: 46px; flex: none; }
.vclip { width: 17px; margin-left: 5px; overflow: hidden; flex: 1; min-height: 0; }
.vruler { list-style: none; margin: -7px 0 0; padding: 0; height: 782px; display: grid; grid-template-rows: repeat(21, 1fr); background: linear-gradient(#c6c6c6 95px, #fff 95px); }
.vruler li { display: flex; align-items: center; justify-content: center; position: relative; writing-mode: vertical-rl; transform: rotate(180deg); font: 9px/12px "Liberation Sans", sans-serif; }
.vruler li::before, .vruler li::after { content: ""; position: absolute; left: 5px; width: 6px; height: 1px; background: #666; }
.vruler li::before { top: 9px; }
.vruler li::after { bottom: 9px; }
.canvas { display: flex; flex-direction: column; align-items: center; min-height: 0; min-width: 0; overflow: hidden; padding-top: 5px; }
.hruler { position: relative; display: flex; flex: none; height: 16px; margin: 0 0 9px 4px; font: 9px/17px "Liberation Sans", sans-serif; background: linear-gradient(90deg, transparent 4px, #c6c6c6 4px 110px, #fff 110px 606px, #c6c6c6 606px 718px, transparent 718px); }
.hruler span { width: 25px; text-align: center; }
.mk { position: absolute; }
.mk.first { left: 135px; top: -3px; }
.mk.hang { left: 160px; top: 9px; }
.mk.right { left: 602px; top: 9px; }
.page { position: relative; flex: none; width: 711px; min-height: 1000px; background: #fff; border: 1px solid #c6c6c6; padding: 63px 85px 0 86px; }
.page.prev { min-height: 31px; padding: 0; border-top: 0; margin-bottom: 13px; }
.corners { display: flex; justify-content: space-between; }
.corners i { width: 21px; height: 22px; border: solid #aaa; border-width: 0 1px 1px 0; }
.corners i + i { border-width: 0 0 1px 1px; }
.text { padding: 0 20px; font: 14px/23px "Noto Sans CJK SC", sans-serif; color: #000; text-spacing-trim: space-all; }
.text p { margin: 0; }
.ln { display: block; height: 23px; white-space: nowrap; }
.ln.full { width: 488px; text-align: justify; text-align-last: justify; }
.ln.max { width: 494px; }
.ln.c20 { width: 287px; }
.ln.c19 { width: 273px; }
.ln.in { padding-left: 29px; }
.ln.loose { margin-top: 8px; }
.list { list-style: none; margin: 36px 0 38px; padding: 0 0 0 29px; line-height: 37px; }
.list li { display: flex; height: 37px; }
.list span + span { padding: 0 14px 0 6px; }
.list .sel { background: #c0c0c0; }
.grid { width: 496px; height: 151px; margin: 0 0 7px -1px; border-collapse: collapse; table-layout: fixed; border-top: 1px solid #000; border-bottom: 1px solid #000; }
.grid td { padding: 0; border: 1px dashed #888; }
.grid tr:first-child td { border-top: 1px solid #000; }
.grid tr:last-child td { border-bottom: 1px solid #000; }
.grid td.u { border-bottom: 1px solid #000; }

/* context menu */
.menu { position: absolute; left: 217px; top: -5px; width: 156px; padding: 1px; background: #fff; border: 1px solid #c6c6c6; box-shadow: 1px 2px 4px rgba(0, 0, 0, 0.25); color: #666; }
.menu button { display: flex; align-items: center; width: 100%; height: 25px; text-align: left; white-space: nowrap; }
.menu button > :first-child { width: 18px; height: 18px; margin: 0 11px 0 2px; }
.menu button > svg[width="16"] { padding: 1px; }
.menu .mi { text-align: center; font-size: 13px; }
.menu .hot { background: #c5c5c5; color: #333; }
.menu hr { margin: 0 0 1px 30px; border: 0; height: 1px; background: #dadada; }
.menu .sub { margin: 0 8px 0 auto; border: 4px solid transparent; border-left-color: #666; border-right: 0; }
.mhead { display: flex; align-items: center; height: 25px; gap: 4px; padding-left: 4px; }
.mhead b { flex: 1; height: 23px; line-height: 22px; padding-left: 8px; background: #e9e9e9; font-weight: 600; }
.menu .mpaste { height: 29px; padding-left: 28px; }
.menu .mpaste > :first-child { width: 22px; height: 24px; }

/* floating toolbar */
.mini { position: absolute; left: 217px; top: 478px; display: flex; width: 255px; height: 71px; background: #fff; border: 1px solid #c6c6c6; box-shadow: 1px 2px 4px rgba(0, 0, 0, 0.25); color: #444; }
.mrows { display: flex; flex-direction: column; gap: 9px; padding: 8px 0 0 3px; width: 210px; border-right: 1px solid #dadada; }
.mname { width: 68px; }
.msize { width: 51px; margin-left: -1px; }
.mstyle { flex: 1; display: flex; flex-direction: column; align-items: center; gap: 8px; padding: 7px 3px 0 0; }
.mstyle span { display: flex; align-items: center; line-height: 16px; }
.arrow { position: absolute; left: 188px; top: 181px; pointer-events: none; }
.shadow { filter: drop-shadow(3px 2px 2px rgba(0, 0, 0, 0.4)); }
.cursor { position: absolute; left: 345px; top: 173px; }

/* status bar */
.status { display: flex; align-items: center; flex: none; height: 18px; gap: 22px; padding-left: 6px; background: #f0f0f0; border-top: 1px solid #c6c6c6; white-space: nowrap; }
.views { display: flex; align-items: center; margin-left: auto; height: 17px; padding-right: 22px; }
.views button { width: 38px; height: 17px; display: grid; place-items: center; }
.views .zm { width: 14px; font-size: 16px; font-weight: 700; line-height: 14px; }
.views input { appearance: none; width: 105px; height: 16px; margin: 0; background: linear-gradient(#999, #999) center / 100% 1px no-repeat; }
.views input::-webkit-slider-thumb { appearance: none; width: 4px; height: 11px; background: #555; }
.pct { padding-left: 11px; }

/* site mark */
.mark { position: absolute; right: 11px; bottom: 0; display: flex; pointer-events: none; }
.mark svg { margin-right: -16px; }
.mark div { display: flex; flex-direction: column; padding-top: 9px; }
.mark strong { font: 500 21px/25px "Noto Sans CJK SC", sans-serif; color: #5a8fcb; }
.mark em { font: 17px/20px "Liberation Sans", sans-serif; color: #4fb56a; }
```
